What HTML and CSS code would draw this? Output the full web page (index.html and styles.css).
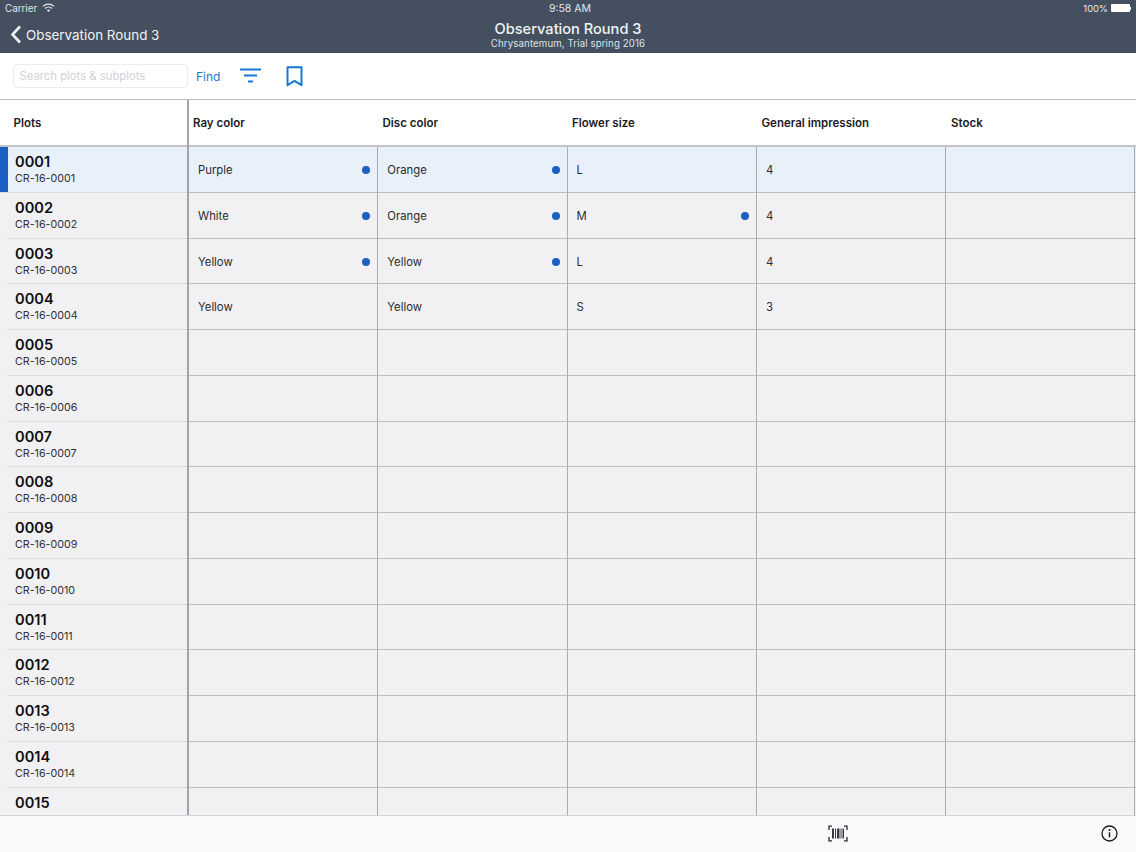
FILE: index.html
```html
<!DOCTYPE html>
<html lang="en">
<head>
<meta charset="utf-8">
<title>Observation Round 3</title>
<link rel="stylesheet" href="styles.css">
</head>
<body>
<div class="app">
  <header class="topbar">
    <div class="status">
      <div class="status-left">Carrier
        <svg class="wifi" width="13" height="10" viewBox="0 0 13 10"><path d="M1 3.4a8 8 0 0 1 11 0M3 5.5a5 5 0 0 1 7 0" fill="none" stroke="currentColor" stroke-width="1.3"/><path d="M4.8 7.3a2.6 2.6 0 0 1 3.4 0L6.5 9z" fill="currentColor"/></svg>
      </div>
      <div class="status-time">9:58 AM</div>
      <div class="status-right">100%
        <span class="battery"></span><span class="battery-tip"></span>
      </div>
    </div>
    <div class="nav">
      <div class="back">
        <svg width="12" height="19" viewBox="0 0 12 19"><path d="M10 1.5 2.5 9.5l7.5 8" fill="none" stroke="currentColor" stroke-width="2.6"/></svg>
        <span>Observation Round 3</span>
      </div>
      <div class="title">
        <div class="title-main">Observation Round 3</div>
        <div class="title-sub">Chrysantemum, Trial spring 2016</div>
      </div>
    </div>
  </header>

  <div class="toolbar">
    <div class="search">Search plots &amp; subplots</div>
    <span class="find">Find</span>
    <svg class="filter-icon" width="21" height="16" viewBox="0 0 21 16"><path d="M0 1.5h21M4 7.5h13M8 13.5h5" stroke="#1878d2" stroke-width="2.2" fill="none"/></svg>
    <svg class="bookmark-icon" width="17" height="21" viewBox="0 0 17 21"><path d="M1.5 1.2h14v18l-7-4.4-7 4.4z" fill="none" stroke="#1878d2" stroke-width="2" stroke-linejoin="round"/></svg>
  </div>

  <main class="table">
    <div class="plots">
      <div class="plots-head">Plots</div>
      <div class="plot selected"><b>0001</b><span>CR-16-0001</span></div>
      <div class="plot"><b>0002</b><span>CR-16-0002</span></div>
      <div class="plot"><b>0003</b><span>CR-16-0003</span></div>
      <div class="plot"><b>0004</b><span>CR-16-0004</span></div>
      <div class="plot"><b>0005</b><span>CR-16-0005</span></div>
      <div class="plot"><b>0006</b><span>CR-16-0006</span></div>
      <div class="plot"><b>0007</b><span>CR-16-0007</span></div>
      <div class="plot"><b>0008</b><span>CR-16-0008</span></div>
      <div class="plot"><b>0009</b><span>CR-16-0009</span></div>
      <div class="plot"><b>0010</b><span>CR-16-0010</span></div>
      <div class="plot"><b>0011</b><span>CR-16-0011</span></div>
      <div class="plot"><b>0012</b><span>CR-16-0012</span></div>
      <div class="plot"><b>0013</b><span>CR-16-0013</span></div>
      <div class="plot"><b>0014</b><span>CR-16-0014</span></div>
      <div class="plot"><b>0015</b><span>CR-16-0015</span></div>
    </div>
    <div class="data">
      <div class="row head"><div>Ray color</div><div>Disc color</div><div>Flower size</div><div>General impression</div><div>Stock</div></div>
      <div class="row selected"><div class="cell dot">Purple</div><div class="cell dot">Orange</div><div class="cell">L</div><div class="cell">4</div><div class="cell"></div></div>
      <div class="row"><div class="cell dot">White</div><div class="cell dot">Orange</div><div class="cell dot">M</div><div class="cell">4</div><div class="cell"></div></div>
      <div class="row"><div class="cell dot">Yellow</div><div class="cell dot">Yellow</div><div class="cell">L</div><div class="cell">4</div><div class="cell"></div></div>
      <div class="row"><div class="cell">Yellow</div><div class="cell">Yellow</div><div class="cell">S</div><div class="cell">3</div><div class="cell"></div></div>
      <div class="row"><div class="cell"></div><div class="cell"></div><div class="cell"></div><div class="cell"></div><div class="cell"></div></div>
      <div class="row"><div class="cell"></div><div class="cell"></div><div class="cell"></div><div class="cell"></div><div class="cell"></div></div>
      <div class="row"><div class="cell"></div><div class="cell"></div><div class="cell"></div><div class="cell"></div><div class="cell"></div></div>
      <div class="row"><div class="cell"></div><div class="cell"></div><div class="cell"></div><div class="cell"></div><div class="cell"></div></div>
      <div class="row"><div class="cell"></div><div class="cell"></div><div class="cell"></div><div class="cell"></div><div class="cell"></div></div>
      <div class="row"><div class="cell"></div><div class="cell"></div><div class="cell"></div><div class="cell"></div><div class="cell"></div></div>
      <div class="row"><div class="cell"></div><div class="cell"></div><div class="cell"></div><div class="cell"></div><div class="cell"></div></div>
      <div class="row"><div class="cell"></div><div class="cell"></div><div class="cell"></div><div class="cell"></div><div class="cell"></div></div>
      <div class="row"><div class="cell"></div><div class="cell"></div><div class="cell"></div><div class="cell"></div><div class="cell"></div></div>
      <div class="row"><div class="cell"></div><div class="cell"></div><div class="cell"></div><div class="cell"></div><div class="cell"></div></div>
      <div class="row"><div class="cell"></div><div class="cell"></div><div class="cell"></div><div class="cell"></div><div class="cell"></div></div>
    </div>
  </main>

  <footer class="bottombar">
    <svg class="scan-icon" width="20" height="17" viewBox="0 0 20 17"><path d="M1 5V1.200h3M16 1.200h3V5M1 12v3.800h3M16 15.800h3V12" fill="none" stroke="#2a2a2e" stroke-width="1.300"/><path d="M4 3.500h2v10H4zM7 3.500h1v10H7zM9 3.500h2.500v10H9zM12.500 3.500h1v10h-1zM14.500 3.500h1.500v10h-1.500z" fill="#3a3a40"/></svg>
    <svg class="info-icon" width="17" height="17" viewBox="0 0 17 17"><circle cx="8.500" cy="8.500" r="7.500" fill="none" stroke="#1c1c20" stroke-width="1.300"/><circle cx="8.500" cy="5" r="1" fill="#1c1c20"/><path d="M8.500 7.300v5" stroke="#1c1c20" stroke-width="1.500"/></svg>
  </footer>
</div>
</body>
</html>
```
FILE: styles.css
```css
* { box-sizing: border-box; }
html, body { margin: 0; padding: 0; }
body { font-family: Inter, "Liberation Sans", sans-serif; background: #fff; color: #1b1b1f; }
.app { width: 1136px; height: 852px; display: flex; flex-direction: column; overflow: hidden; }

.topbar { height: 53px; flex: none; background: #44505f; color: #f1f3f6; }
.status { height: 16px; display: grid; grid-template-columns: 1fr auto 1fr; align-items: center; padding: 0 5px; font-size: 9.800px; color: #e4e7ec; }
.status-left { display: flex; align-items: center; gap: 5px; }
.status-time { font-size: 10.500px; margin-left: 4px; }
.wifi { margin-top: -1px; }
.status-right { display: flex; align-items: center; justify-content: flex-end; font-size: 9.300px; }
.battery { width: 19px; height: 8px; margin-left: 3px; background: #fff; border-radius: 1px; display: block; }
.battery-tip { width: 1px; height: 3px; background: #fff; }
.nav { display: grid; grid-template-columns: 1fr auto 1fr; align-items: start; padding-left: 10px; padding-right: 10px; }
.back { display: flex; align-items: center; gap: 4px; font-size: 13.400px; margin-top: 9px; height: 19px; }
.title { text-align: center; margin-top: 4px; }
.title-main { font-size: 14.600px; line-height: 18px; font-weight: 500; }
.title-sub { font-size: 9.700px; line-height: 12px; color: #dfe3e8; letter-spacing: .1px; }

.toolbar { height: 47px; flex: none; background: #fff; border-bottom: 1px solid #b9b9bc; display: flex; align-items: center; padding-left: 13px; }
.search { width: 175px; height: 24px; border: 1px solid #ececee; border-radius: 4px; font-size: 11.300px; line-height: 22px; padding-left: 5.500px; color: #d2d2d6; }
.find { font-size: 12px; color: #1878d2; margin-left: 8px; }
.filter-icon { margin-left: 20px; }
.bookmark-icon { margin-left: 25px; margin-top: 1px; }

.table { flex: 1; min-height: 0; display: flex; overflow: hidden; background: #f1f1f3; }
.plots { width: 189px; flex: none; border-right: 2px solid #a4a4a8; }
.plots-head { height: 47px; background: #fff; border-bottom: 2px solid #c4c4c8; font-size: 11.500px; font-weight: 600; padding-left: 13.500px; line-height: 46px; }
.plot { height: 45.750px; padding: 6px 0 0 15px; position: relative; display: flex; flex-direction: column; }
.plot::after { content: ""; position: absolute; left: 7px; right: 0; bottom: 0; height: 1px; background: #dcdcdf; }
.plot b { font-size: 14.600px; line-height: 18px; font-weight: 600; color: #0e0e12; }
.plot span { font-size: 10.700px; line-height: 15px; color: #303034; }
.plot.selected { background: #e8f0fa; border-left: 8px solid #1c5fc4; padding-left: 7px; }
.plot.selected::after { left: -8px; }

.data { flex: 1; min-width: 0; }
.row { display: grid; grid-template-columns: repeat(5, 189.300px); height: 45.750px; border-bottom: 1px solid #bdbdc1; }
.row.head { grid-template-columns: repeat(5, 189.500px); height: 47px; background: #fff; border-bottom: 2px solid #c4c4c8; font-size: 11.500px; font-weight: 600; line-height: 46px; }
.row.head > div { padding-left: 4px; }
.row.selected { background: #e8f0fa; }
.cell { border-right: 1.500px solid #acacb0; padding-left: 9px; font-size: 11.300px; line-height: 46px; color: #2b2b2f; position: relative; }
.cell.dot::after { content: ""; position: absolute; right: 7px; top: 19px; width: 8px; height: 8px; border-radius: 50%; background: #1c5fc4; }

.bottombar { height: 37px; flex: none; background: #f9f9fb; border-top: 1px solid #d4d4d8; display: flex; align-items: center; justify-content: flex-end; position: relative; z-index: 1; }
.scan-icon { margin-right: 253px; margin-top: -2px; }
.info-icon { margin-right: 18px; margin-top: -1px; }
```
